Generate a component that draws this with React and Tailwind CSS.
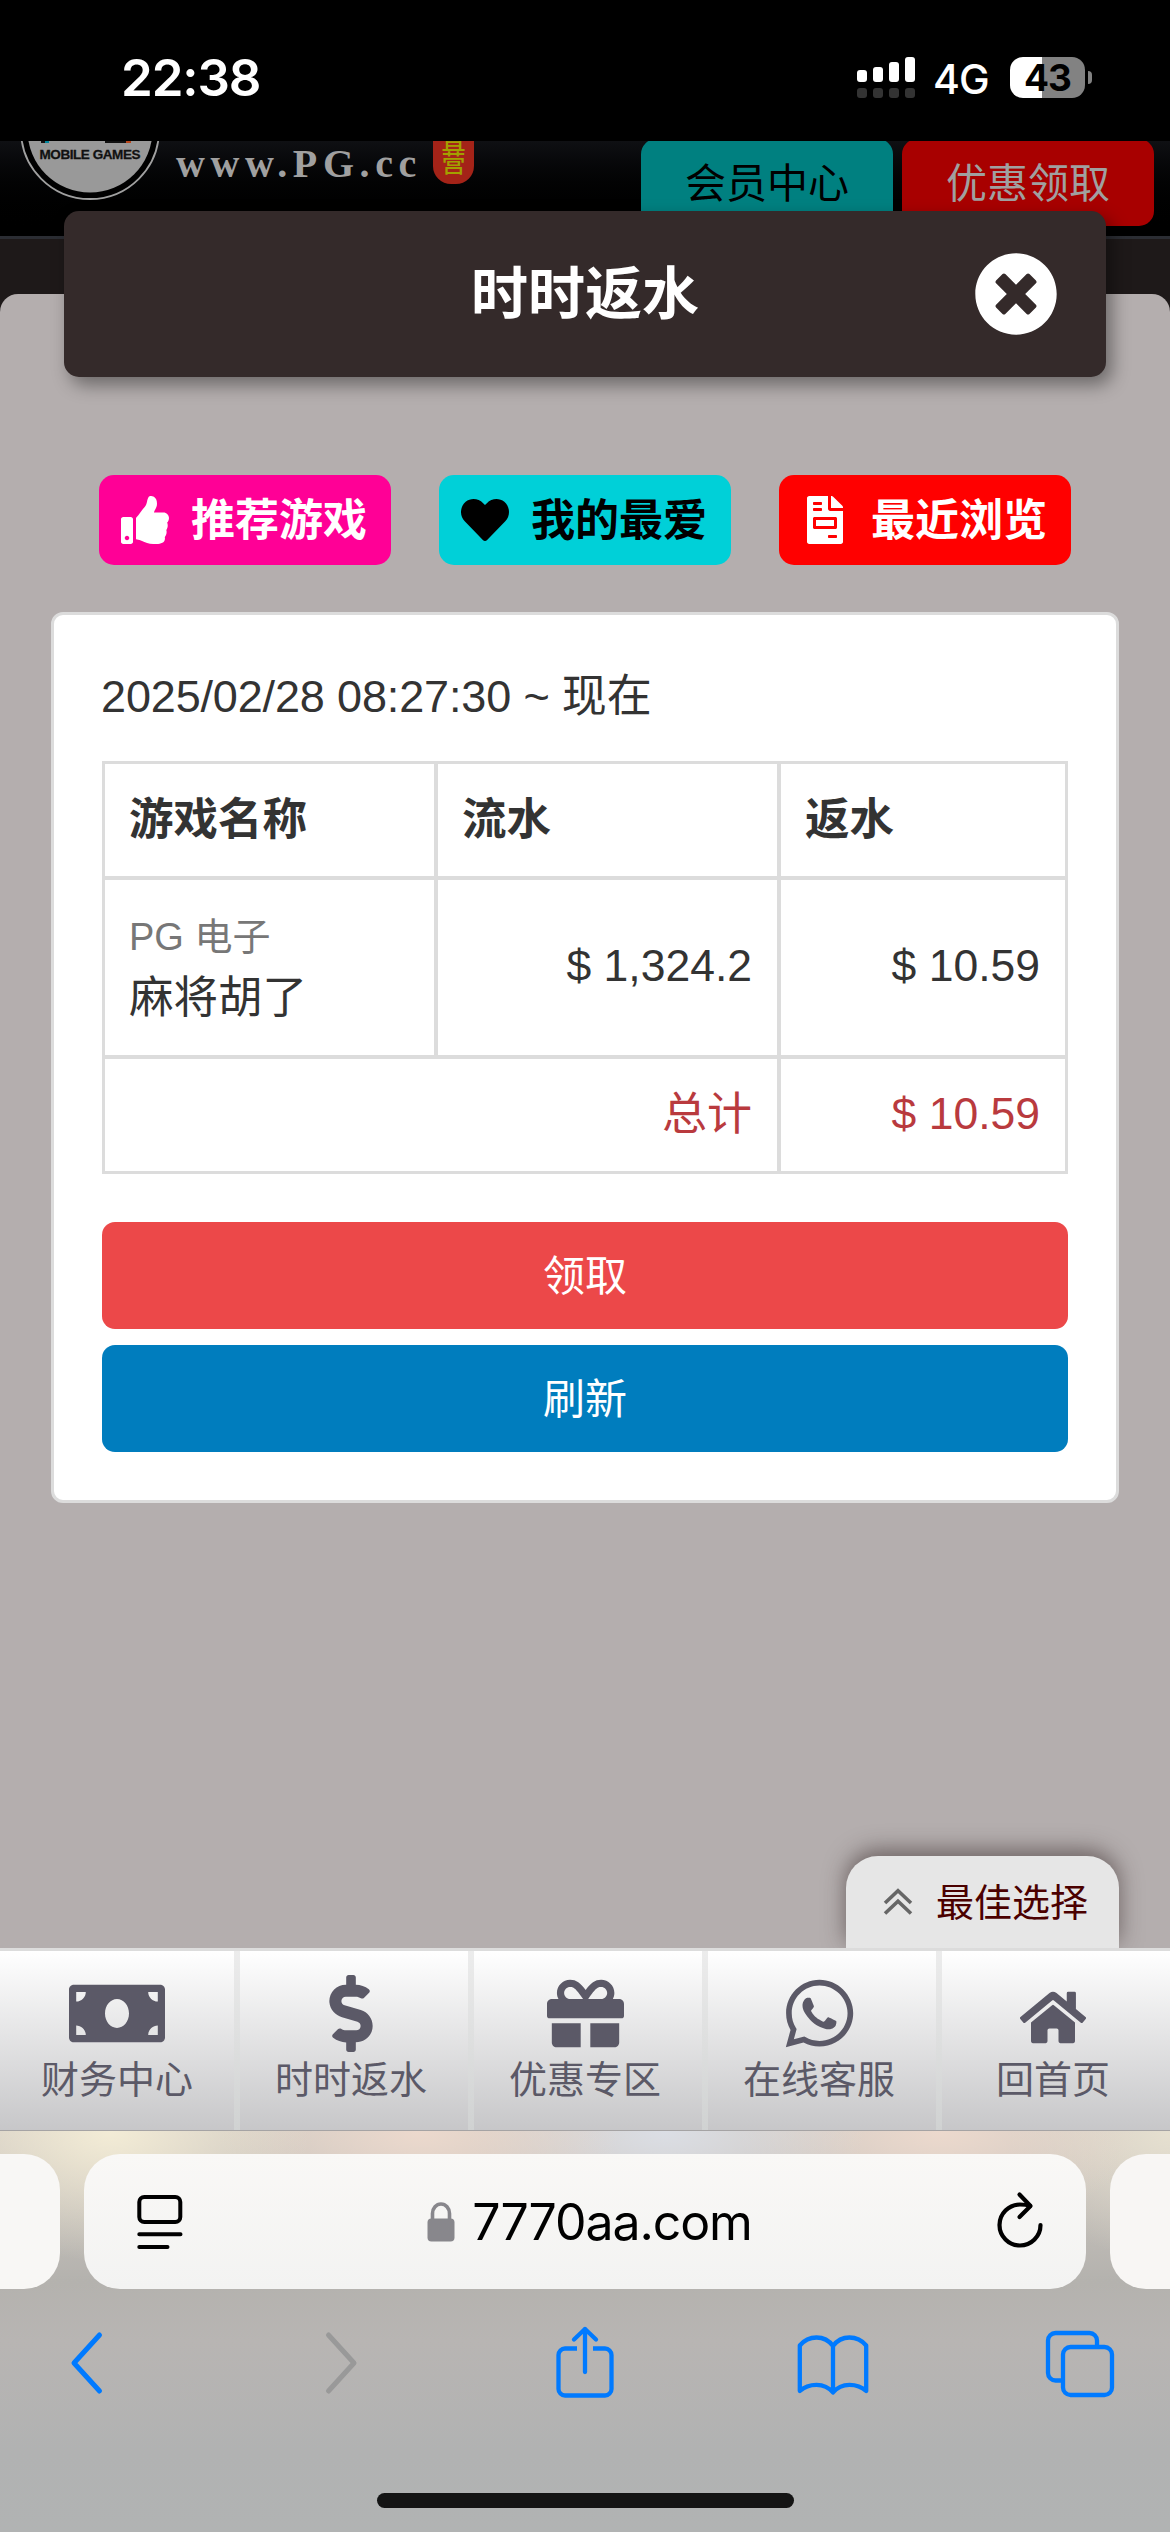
// src/App.jsx
import {
  FaDollarSign,
  FaFileInvoice,
  FaGift,
  FaHeart,
  FaHome,
  FaMoneyBill,
  FaThumbsUp,
  FaTimesCircle,
  FaWhatsapp,
} from "react-icons/fa";

const SHORTCUTS = [
  { label: "推荐游戏", icon: FaThumbsUp, color: "bg-[#ff0096] text-white" },
  { label: "我的最爱", icon: FaHeart, color: "bg-[#00d0d8] text-black" },
  { label: "最近浏览", icon: FaFileInvoice, color: "bg-[#ff0000] text-white" },
];

const NAV_ITEMS = [
  { label: "财务中心", icon: FaMoneyBill, size: "w-[96px] h-[77px]" },
  { label: "时时返水", icon: FaDollarSign, size: "w-[44px] h-[77px]" },
  { label: "优惠专区", icon: FaGift, size: "w-[77px] h-[77px]" },
  { label: "在线客服", icon: FaWhatsapp, size: "w-[77px] h-[77px]" },
  { label: "回首页", icon: FaHome, size: "w-[66px] h-[59px] mt-[8px]" },
];

const SIGNAL = ["h-[12px]", "h-[15px]", "h-[20px]", "h-[25px]"];

const StatusBar = () => (
  <div className="h-[141px] shrink-0 bg-black text-white font-['Inter',sans-serif] flex items-start justify-between pl-[121px] pr-[78px]">
    <span className="mt-[46px] text-[51px] leading-[64px] font-semibold tracking-[-1.1px]">
      22:38
    </span>
    <div className="flex items-start mt-[57px]">
      <div className="flex items-end gap-[6px]">
        {SIGNAL.map((h) => (
          <div key={h} className="flex flex-col gap-[6px]">
            <div className={`w-[10px] rounded-[3px] bg-white ${h}`} />
            <div className="w-[10px] h-[10px] rounded-[3px] bg-[#333]" />
          </div>
        ))}
      </div>
      <span className="ml-[18px] w-[59px] mt-[-3px] text-[41px] leading-[50px] tracking-[-1px] font-medium">
        4G
      </span>
      <div className="ml-[18px] w-[75px] h-[41px] rounded-[13px] bg-[linear-gradient(90deg,#fff_43%,#828282_43%)] text-black text-[37px] leading-[42px] font-bold text-center tracking-[-1px]">
        43
      </div>
      <div className="mt-[14px] ml-[3px] w-[4px] h-[13px] rounded-r-full bg-[#828282]" />
    </div>
  </div>
);

const SiteHeader = () => (
  <header className="h-[98px] shrink-0 overflow-hidden border-b-[3px] border-[#2b2d33] bg-gradient-to-b from-[#0f1013] to-black flex items-start">
    <svg className="ml-[20px] w-[140px] h-[60px] shrink-0" viewBox="20 141 140 60">
      <circle cx="90" cy="130" r="69" fill="#000" stroke="#a0a0a0" strokeWidth="1.8" />
      <circle cx="90" cy="130" r="62.5" fill="#999" />
      <rect x="41" y="141" width="5" height="2" fill="#111" />
      <rect x="45" y="141" width="4" height="2" fill="#00839a" />
      <rect x="105" y="141" width="21" height="2" fill="#111" />
      <rect x="126" y="141" width="5" height="2" fill="#b8451a" />
      <text x="90" y="158.5" textAnchor="middle" textLength="101" fontSize="13.5" fontWeight="bold" fontFamily="Liberation Sans" fill="#111" stroke="#111" strokeWidth="0.3">
        MOBILE GAMES
      </text>
    </svg>
    <span className="ml-[16px] w-[250px] font-['Liberation_Serif',serif] font-bold text-[40px] leading-[46px] tracking-[5.6px] text-[#a0a0a0] whitespace-nowrap">
      www.PG.cc
    </span>
    {/* Seal stamp */}
    <div className="ml-[7px] h-[43px] w-[41px] rounded-b-[18px] bg-[#a42318] text-[#a3a000] text-[24px] leading-[23px] font-medium flex flex-col items-center">
      <span className="mt-[-12px]">直</span>
      <span>营</span>
    </div>
    <div className="ml-auto mr-[16px] mt-[-2px] flex gap-[9px] text-[41px] leading-[90px] text-center">
      <div className="w-[252px] h-[87px] rounded-[15px] bg-[#008080] text-black">会员中心</div>
      <div className="w-[252px] h-[87px] rounded-[15px] bg-[#a80000] text-[#a0a0a0]">优惠领取</div>
    </div>
  </header>
);

const RebateTable = () => (
  <table className="mt-[34px] w-[966px] table-fixed border-separate border-spacing-0 border-[1px] border-[#dcdcdc] text-[44.5px] leading-[60px] text-[#333]">
    <colgroup>
      <col className="w-[333px]" />
      <col className="w-[343px]" />
      <col />
    </colgroup>
    <tbody>
      <tr className="h-[116px] text-left">
        <th className="border-2 border-[#dcdcdc] px-[24px] text-[44.5px] font-bold">游戏名称</th>
        <th className="border-2 border-[#dcdcdc] px-[24px] text-[44.5px] font-bold">流水</th>
        <th className="border-2 border-[#dcdcdc] px-[24px] text-[44.5px] font-bold">返水</th>
      </tr>
      <tr className="h-[179px]">
        <td className="border-2 border-[#dcdcdc] px-[24px]">
          <div className="text-[38px] leading-[60px] text-[#777]">PG 电子</div>
          <div className="text-[44.5px] leading-[62px]">麻将胡了</div>
        </td>
        <td className="border-2 border-[#dcdcdc] px-[25px] pb-[4px] text-right">$ 1,324.2</td>
        <td className="border-2 border-[#dcdcdc] px-[25px] pb-[4px] text-right">$ 10.59</td>
      </tr>
      <tr className="h-[116px] text-right text-[#b93a3e]">
        <td colSpan={2} className="border-2 border-[#dcdcdc] px-[25px] text-[45px]">总计</td>
        <td className="border-2 border-[#dcdcdc] px-[25px] pb-[2px]">$ 10.59</td>
      </tr>
    </tbody>
  </table>
);

const BottomNav = () => (
  <nav className="h-[182px] shrink-0 border-t-[3px] border-[#dcdcdc] flex bg-gradient-to-b from-[#ececec] to-[#d0d2d2] gap-[6px] text-[#5b5967]">
    {NAV_ITEMS.map(({ label, icon: Icon, size }, i) => (
      <div
        key={label}
        className={`h-full bg-gradient-to-b from-white to-[#c7c7c9] flex flex-col items-center ${
          i === 0 ? "w-[234px]" : "w-[228px] pr-[6px]"
        }`}
      >
        <div className="mt-[24px] h-[77px] flex items-center justify-center">
          <Icon className={size} />
        </div>
        <span className="text-[38px] leading-[56px]">{label}</span>
      </div>
    ))}
  </nav>
);

const SafariBar = () => (
  <footer className="h-[402px] shrink-0 border-t border-[#a5a3a4] flex flex-col items-center bg-[radial-gradient(ellipse_200px_130px_at_110px_0px,#f3ecd6,transparent),radial-gradient(ellipse_200px_100px_at_420px_0px,#ecd9cd,transparent),radial-gradient(ellipse_200px_100px_at_665px_0px,#dbdee5,transparent),radial-gradient(ellipse_200px_100px_at_940px_0px,#ecd9cd,transparent),radial-gradient(ellipse_160px_130px_at_1170px_0px,#e6e0d0,transparent),linear-gradient(180deg,#d2cbc3_0px,#b4b2ae_150px,#b8b5b3_210px,#b1b2b2_320px,#b1b3b3_400px)]">
    <div className="mt-[23px] w-full h-[135px] flex justify-between">
      <div className="w-[60px] rounded-r-[36px] bg-[#f8f7f5]" />
      <div className="w-[1002px] rounded-[36px] bg-gradient-to-b from-[#f9f8f6] to-[#f3f3f2] flex items-center justify-between pl-[53px] pr-[42px]">
        <svg className="w-[46px] h-[56px]" viewBox="0 0 46 56" fill="none" stroke="#000" strokeWidth="4" strokeLinecap="round">
          <rect x="2.3" y="3" width="41" height="25" rx="5" />
          <path d="M2.3 40.2H43.5M2.3 53H30.5" />
        </svg>
        <div className="flex items-center">
          <svg className="w-[28px] h-[40px]" viewBox="0 0 28 40">
            <path d="M5.5 19v-7.5a8.5 9.5 0 0 1 17 0V19" fill="none" stroke="#88878c" strokeWidth="3.6" />
            <rect x="0.5" y="16.5" width="27" height="23" rx="4" fill="#88878c" />
          </svg>
          <span className="ml-[17px] font-['Inter',sans-serif] text-[50px] leading-[60px] tracking-[-1.1px] text-black">
            7770aa.com
          </span>
        </div>
        <svg className="w-[48px] h-[58px] mt-[-5px]" viewBox="0 0 48 58" fill="none" stroke="#000" strokeWidth="4.2" strokeLinecap="round" strokeLinejoin="round">
          <path d="M44.500 35a20.500 20.500 0 1 1-20.500-20.500c4 0 7 .3 10 1.500" />
          <path d="M23.500 4.500l11 11.500-11 11" />
        </svg>
      </div>
      <div className="w-[60px] rounded-l-[36px] bg-[#f8f6f4]" />
    </div>

    <div className="mt-[36px] w-full h-[76px] pl-[69px] flex items-center text-[#007aff]">
      <svg className="w-[36px] h-[64px]" viewBox="0 0 36 64" fill="none" stroke="currentColor" strokeWidth="5" strokeLinecap="round" strokeLinejoin="round">
        <path d="M30.500 4L5 32l25.500 28" />
      </svg>
      <svg className="ml-[218px] w-[36px] h-[64px]" viewBox="0 0 36 64" fill="none" stroke="#999" strokeWidth="5" strokeLinecap="round" strokeLinejoin="round">
        <path d="M5.500 4L31 32 5.500 60" />
      </svg>
      <svg className="ml-[196px] w-[60px] h-[74px]" viewBox="0 0 60 74" fill="none" stroke="currentColor" strokeWidth="4.300" strokeLinecap="round" strokeLinejoin="round">
        <path strokeLinecap="butt" d="M22 22.500H10a6.500 6.500 0 0 0-6.500 6.500v34a6.500 6.500 0 0 0 6.500 6.500h40a6.500 6.500 0 0 0 6.500-6.500V29a6.500 6.500 0 0 0-6.500-6.500H38" />
        <path d="M30 46V3M19 13.500L30 3l11 10.500" />
      </svg>
      <svg className="ml-[181px] mt-[4px] w-[74px] h-[62px]" viewBox="0 0 74 62" fill="none" stroke="currentColor" strokeWidth="4.300" strokeLinecap="round" strokeLinejoin="round">
        <path d="M37 12C33 6.500 27 3.500 20.500 3.500S8 6.500 3.800 11.500V57c4.200-4 9.700-6.200 16.700-6.200S33 53.500 37 58.500c4-5 9.500-7.700 16.500-7.700S66 53 70.200 57V11.500C66 6.500 60 3.500 53.500 3.500S41 6.500 37 12zM37 12v46.500" />
      </svg>
      <svg className="ml-[175px] mt-[2px] w-[70px] h-[68px]" viewBox="0 0 70 68" fill="none" stroke="currentColor" strokeWidth="4.300">
        <path d="M17 50.500h-6.500a7.500 7.500 0 0 1-7.500-7.500V10.500A7.500 7.500 0 0 1 10.500 3h34a7.500 7.500 0 0 1 7.500 7.500V17" />
        <rect x="18" y="17" width="49" height="48" rx="7.500" />
      </svg>
    </div>

    <div className="mt-[92px] w-[417px] h-[15px] rounded-full bg-[#141414]" />
  </footer>
);

const App = () => {
  return (
    <div className="w-[1170px] h-[2532px] overflow-hidden flex flex-col bg-[#1e1919] font-['Liberation_Sans','Noto_Sans_CJK_SC',sans-serif]">
      <StatusBar />
      <SiteHeader />

      <main className="mt-[55px] flex-1 rounded-t-[18px] bg-[#b4aeae] flex flex-col items-center">
        {/* Modal title */}
        <div className="relative z-10 mt-[-83px] w-[1042px] h-[166px] shrink-0 rounded-[15px] bg-[#342a2a] shadow-[6px_8px_18px_rgba(0,0,0,0.4)] grid grid-cols-[1fr_auto_1fr] items-center">
          <span />
          <h1 className="text-[57px] leading-[80px] font-bold text-white">时时返水</h1>
          <FaTimesCircle className="justify-self-end mr-[48px] w-[84px] h-[84px] text-white" />
        </div>

        <div className="mt-[98px] flex gap-[48px]">
          {SHORTCUTS.map(({ label, icon: Icon, color }) => (
            <div key={label} className={`w-[292px] h-[90px] pl-[22px] rounded-[15px] flex items-center ${color}`}>
              <Icon className="w-[48px] h-[48px]" />
              <span className="ml-[22px] pt-[1px] text-[44px] leading-[60px] font-bold">{label}</span>
            </div>
          ))}
        </div>

        {/* Rebate card */}
        <section className="mt-[47px] w-[1068px] h-[891px] rounded-[12px] border-[3px] border-[#dcdcdc] bg-white px-[48px] pt-[52px]">
          <p className="ml-[-1px] text-[45px] leading-[60px] text-[#333] whitespace-nowrap tracking-[-0.15px]">
            2025/02/28 08:27:30 ~ 现在
          </p>
          <RebateTable />
          <div className="mt-[48px] flex flex-col gap-[16px] text-[42px] leading-[110px] text-white text-center">
            <div className="h-[107px] rounded-[13px] bg-[#ec4849]">领取</div>
            <div className="h-[107px] rounded-[13px] bg-[#007dbe]">刷新</div>
          </div>
        </section>

        <div className="mt-auto mr-[51px] self-end w-[273px] h-[92px] rounded-t-[32px] bg-[#e6e6e6] shadow-[0_-6px_22px_rgba(50,35,35,0.55)] [clip-path:inset(-40px_-40px_0px_-40px)] flex items-center pl-[37px]">
          <svg className="w-[30px] h-[28px]" viewBox="0 0 30 28" fill="none" stroke="#666" strokeWidth="3.600">
            <path d="M2 15L15 2.800 28 15M2 25.500L15 13.300 28 25.500" />
          </svg>
          <span className="ml-[23px] pt-[2px] text-[38px] leading-[56px] text-[#4b0000]">最佳选择</span>
        </div>
      </main>

      <BottomNav />
      <SafariBar />
    </div>
  );
};

export default App;
